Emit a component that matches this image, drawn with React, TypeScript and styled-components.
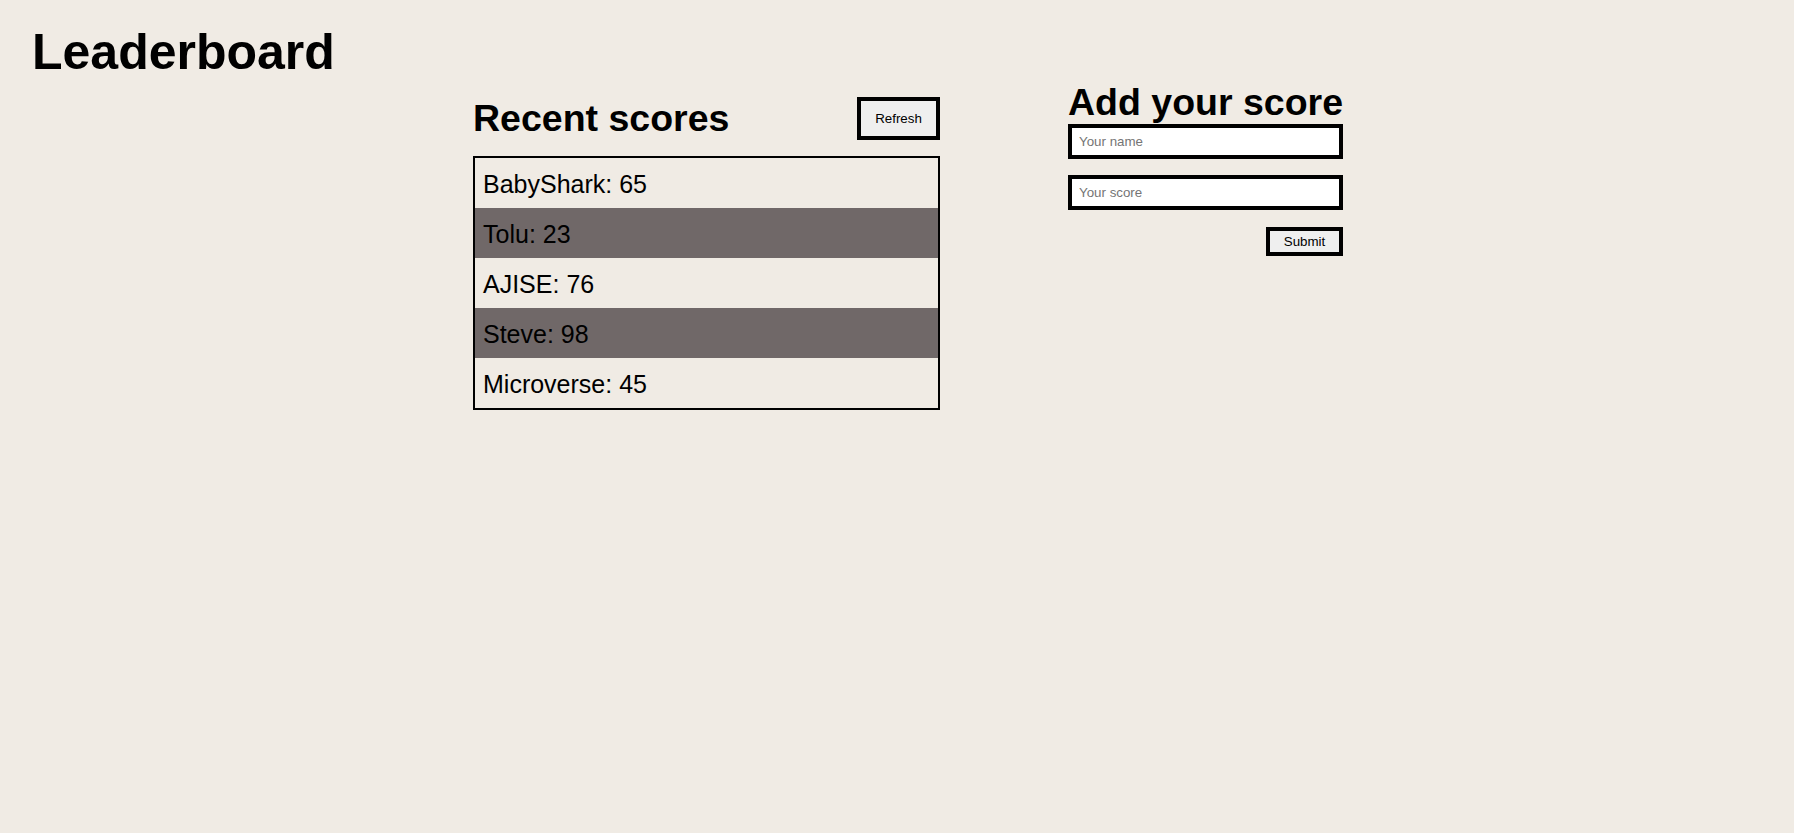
import React from "react";
import styled, { createGlobalStyle } from "styled-components";

const GlobalStyle = createGlobalStyle`
  html, body {
    margin: 0;
    padding: 0;
    background: #f0ebe4;
  }
  body {
    font-family: "Liberation Sans", Arial, sans-serif;
    color: #000;
  }
  * { box-sizing: border-box; }
`;

const Page = styled.div`
  min-height: 833px;
  padding: 25px 0 0 32px;
`;

const Title = styled.h1`
  margin: 0;
  font-size: 50px;
  line-height: 55px;
  font-weight: 700;
`;

const Main = styled.main`
  display: flex;
  align-items: flex-start;
  gap: 128px;
  margin-left: 441px;
`;

const ScoresSection = styled.section`
  width: 467px;
  padding-top: 17px;
`;

const HeaderRow = styled.div`
  display: flex;
  justify-content: space-between;
  align-items: center;
  height: 43px;
`;

const Heading = styled.h2`
  margin: 0;
  font-size: 37.5px;
  font-weight: 700;
  line-height: normal;
  white-space: nowrap;
`;

const OutlineButton = styled.button<{ $w: number; $h: number }>`
  width: ${(p) => p.$w}px;
  height: ${(p) => p.$h}px;
  border: 4px solid #000;
  background: #efefef;
  font-family: "Liberation Sans", Arial, sans-serif;
  font-size: 13.33px;
  color: #000;
  padding: 0;
  cursor: pointer;
`;

const ScoreList = styled.ul`
  list-style: none;
  margin: 16px 0 0;
  padding: 0;
  border: 2px solid #000;
`;

const ScoreRow = styled.li<{ $shaded: boolean }>`
  display: flex;
  align-items: center;
  height: 50px;
  padding: 2px 0 0 8px;
  font-size: 25px;
  background: ${(p) => (p.$shaded ? "#706868" : "transparent")};
`;

const FormSection = styled.form`
  width: 275px;
  padding-top: 1px;
  display: flex;
  flex-direction: column;
`;

const TextInput = styled.input<{ $mt?: number }>`
  display: block;
  width: 100%;
  height: 35px;
  border: 4px solid #000;
  background: #fff;
  padding: 0 7px;
  font: 400 13.333px "Liberation Sans", Arial, sans-serif;
  color: #000;
  margin-top: ${(p) => p.$mt ?? 0}px;
  &::placeholder {
    color: #757575;
  }
`;

const SubmitRow = styled.div`
  display: flex;
  justify-content: flex-end;
  margin-top: 17px;
`;

const scores = [
  { name: "BabyShark", score: 65 },
  { name: "Tolu", score: 23 },
  { name: "AJISE", score: 76 },
  { name: "Steve", score: 98 },
  { name: "Microverse", score: 45 },
];

export default function App() {
  return (
    <>
      <GlobalStyle />
      <Page>
        <Title>Leaderboard</Title>
        <Main>
          <ScoresSection>
            <HeaderRow>
              <Heading>Recent scores</Heading>
              <OutlineButton type="button" $w={83} $h={43}>
                Refresh
              </OutlineButton>
            </HeaderRow>
            <ScoreList>
              {scores.map((s, i) => (
                <ScoreRow key={s.name} $shaded={i % 2 === 1}>
                  {s.name}: {s.score}
                </ScoreRow>
              ))}
            </ScoreList>
          </ScoresSection>
          <FormSection onSubmit={(e) => e.preventDefault()}>
            <Heading>Add your score</Heading>
            <TextInput type="text" placeholder="Your name" />
            <TextInput type="text" placeholder="Your score" $mt={16} />
            <SubmitRow>
              <OutlineButton type="submit" $w={77} $h={29}>
                Submit
              </OutlineButton>
            </SubmitRow>
          </FormSection>
        </Main>
      </Page>
    </>
  );
}
